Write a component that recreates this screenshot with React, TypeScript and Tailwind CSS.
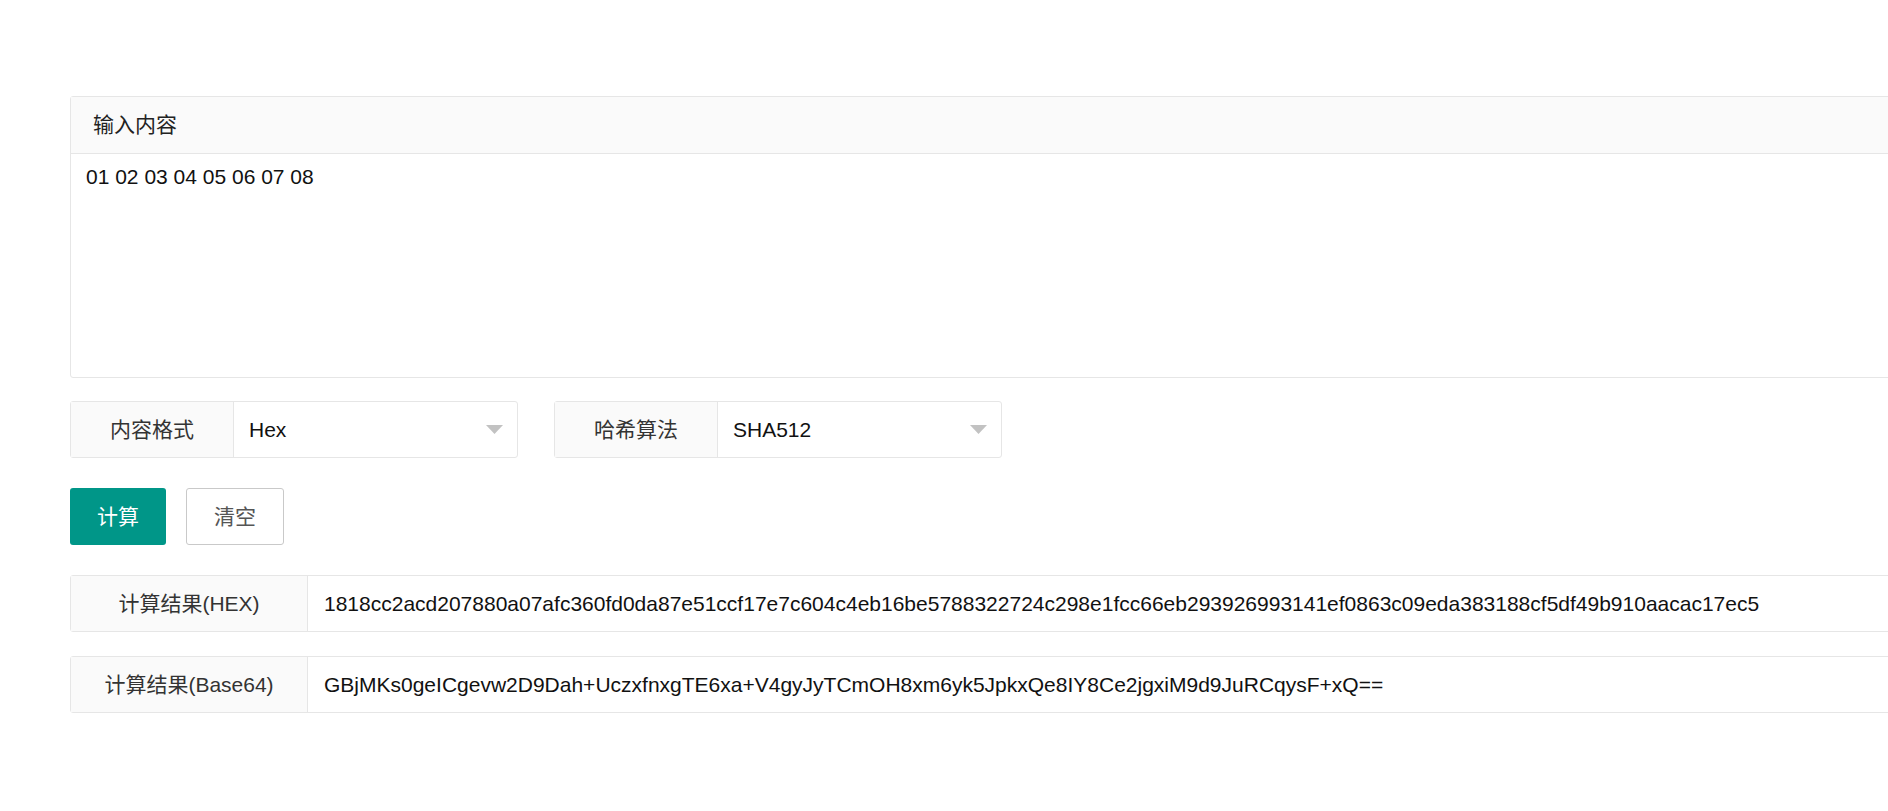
import { memo } from "react";

const font = "font-['Liberation_Sans','Noto_Sans_CJK_SC',sans-serif]";

function Arrow() {
  return (
    <svg width="17" height="9" viewBox="0 0 17 9" className="shrink-0">
      <path d="M0 0 H17 L8.5 9 Z" fill="#c2c2c2" />
    </svg>
  );
}

function SelectBox({ label, value }: { label: string; value: string }) {
  return (
    <div className="w-[448px] h-[57px] border border-[#e6e6e6] rounded-[3px] flex bg-white">
      <div className="w-[163px] shrink-0 bg-[#fafafa] border-r border-[#e6e6e6] flex items-center justify-center text-[21px] text-[#333]">
        {label}
      </div>
      <div className="flex-1 flex items-center justify-between pl-[15px] pr-[14px] text-[21px] text-[#111]">
        <span>{value}</span>
        <Arrow />
      </div>
    </div>
  );
}

function ResultRow({ label, value }: { label: string; value: string }) {
  return (
    <div className="w-[1840px] h-[57px] border border-[#e6e6e6] rounded-[3px] flex bg-white">
      <div className="w-[237px] shrink-0 bg-[#fafafa] border-r border-[#e6e6e6] flex items-center justify-center text-[21px] text-[#333]">
        {label}
      </div>
      <div className="flex-1 flex items-center pl-[16px] text-[21px] text-[#111] whitespace-nowrap">
        {value}
      </div>
    </div>
  );
}

function App() {
  return (
    <div className={`w-full h-[811px] overflow-hidden bg-white ${font}`}>
      <div className="pt-[96px] pl-[70px] flex flex-col">
        {/* 输入区域 */}
        <div className="w-[1840px] h-[282px] border border-[#e6e6e6] rounded-[3px] flex flex-col">
          <div className="h-[57px] shrink-0 bg-[#fafafa] border-b border-[#e6e6e6] flex items-center pl-[22px] text-[21px] text-[#222]">
            输入内容
          </div>
          <div className="flex-1 pt-[8px] pl-[15px] text-[21px] leading-[30px] text-[#111]">
            01 02 03 04 05 06 07 08
          </div>
        </div>

        {/* 选项 */}
        <div className="flex gap-[36px] mt-[23px]">
          <SelectBox label="内容格式" value="Hex" />
          <SelectBox label="哈希算法" value="SHA512" />
        </div>

        {/* 按钮 */}
        <div className="flex gap-[20px] mt-[30px]">
          <button className="w-[96px] h-[57px] bg-[#009688] text-white rounded-[3px] text-[21px]">
            计算
          </button>
          <button className="w-[98px] h-[57px] bg-white border border-[#c9c9c9] text-[#555] rounded-[3px] text-[21px]">
            清空
          </button>
        </div>

        {/* 结果 */}
        <div className="flex flex-col gap-[24px] mt-[30px]">
          <ResultRow
            label="计算结果(HEX)"
            value="1818cc2acd207880a07afc360fd0da87e51ccf17e7c604c4eb16be5788322724c298e1fcc66eb293926993141ef0863c09eda383188cf5df49b910aacac17ec5"
          />
          <ResultRow
            label="计算结果(Base64)"
            value="GBjMKs0geICgevw2D9Dah+UczxfnxgTE6xa+V4gyJyTCmOH8xm6yk5JpkxQe8IY8Ce2jgxiM9d9JuRCqysF+xQ=="
          />
        </div>
      </div>
    </div>
  );
}

export default memo(App);
